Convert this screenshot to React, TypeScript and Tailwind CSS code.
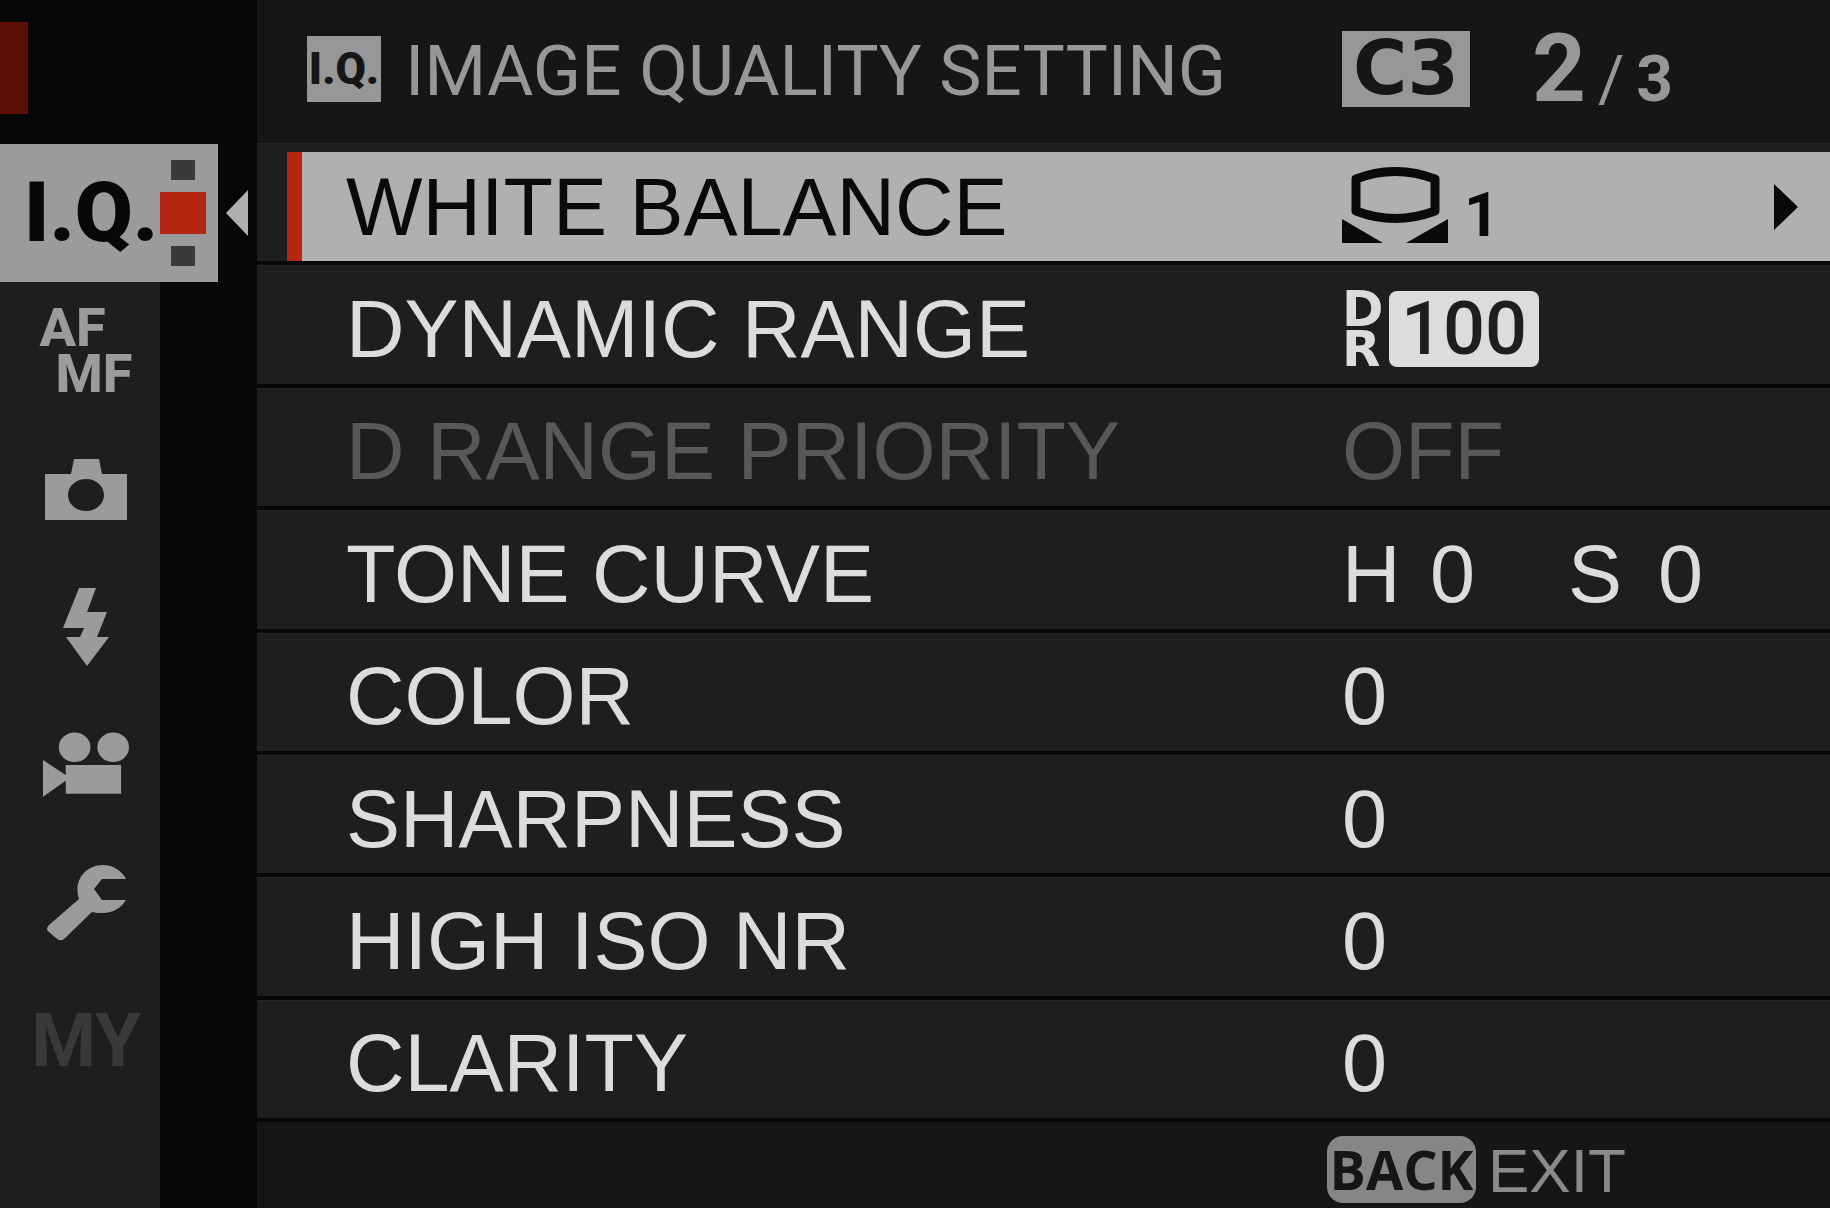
import React from "react";
import clsx from "clsx";

const CameraIcon = () => (
  <svg className="w-[82px] h-[61px]" viewBox="0 0 82 61" fill="currentColor" aria-hidden="true">
    <path
      fillRule="evenodd"
      d="M0 15H26L29 0H54L57 15H82V61H0ZM41 20C31 20 23 27 23 36S31 52 41 52S59 45 59 36S51 20 41 20Z"
    />
  </svg>
);

const FlashIcon = () => (
  <svg className="w-[46px] h-[78px]" viewBox="0 0 46 78" fill="currentColor" aria-hidden="true">
    <path d="M16 0H33L24 24H44L34 49H46L24 78L3 49H17L21 40H0Z" />
  </svg>
);

const MovieIcon = () => (
  <svg className="w-[86px] h-[66px]" viewBox="0 0 87 66" fill="currentColor" aria-hidden="true">
    <ellipse cx="32" cy="15" rx="16" ry="15" />
    <ellipse cx="71" cy="15" rx="16" ry="15" />
    <path d="M0 28L23 43V33H79V62H23V49L0 65Z" />
  </svg>
);

const WrenchIcon = () => (
  <svg className="w-[80px] h-[76px]" viewBox="0 0 80 76" fill="currentColor" aria-hidden="true">
    <path d="M80 14H56L48 24L56 35H80C75 43 67 48 57 48C53 48 50 48 46 47L18 74Q14 77 10 73L3 67Q-1 64 3 60L33 34C27 16 39 0 57 0C67 0 76 6 80 14Z" />
  </svg>
);

const CustomWhiteBalanceIcon = () => (
  <svg className="w-[106px] h-[76px]" viewBox="0 0 106 76" fill="currentColor" aria-hidden="true">
    <path
      d="M14 12Q53 -3 93 12V44Q53 59 14 44Z"
      fill="none"
      stroke="currentColor"
      strokeWidth="9"
      strokeLinejoin="round"
    />
    <path d="M0 52L41 76H0ZM106 52V76H64Z" />
  </svg>
);

interface Tab {
  name: string;
  icon: React.ReactNode;
  disabled?: boolean;
}

const tabs: Tab[] = [
  {
    name: "AF MF setting",
    icon: (
      <span className="flex flex-col text-[54px] leading-[46px] font-extrabold text-left">
        <span>AF</span>
        <span className="pl-4">MF</span>
      </span>
    ),
  },
  { name: "Shooting setting", icon: <CameraIcon /> },
  { name: "Flash setting", icon: <FlashIcon /> },
  { name: "Movie setting", icon: <MovieIcon /> },
  { name: "Set up", icon: <WrenchIcon /> },
  {
    name: "My menu",
    icon: <span className="text-[74px] leading-none font-bold">MY</span>,
    disabled: true,
  },
];

interface Setting {
  label: string;
  value: React.ReactNode;
  disabled?: boolean;
}

const settings: Setting[] = [
  {
    label: "WHITE BALANCE",
    value: (
      <span className="flex items-end pb-1">
        <CustomWhiteBalanceIcon />
        <span className="pl-4 font-['Roboto',sans-serif] text-[62px] leading-[56px] font-bold">1</span>
      </span>
    ),
  },
  {
    label: "DYNAMIC RANGE",
    value: (
      <span className="flex items-center">
        <span className="flex flex-col w-[47px] font-['DejaVu_Sans',sans-serif] text-[50px] leading-[40px] font-bold">
          <span>D</span>
          <span>R</span>
        </span>
        <span className="flex items-center h-[76px] px-3 rounded-lg bg-[#dcdcdc] text-[#1e1e1e] font-['Roboto',sans-serif] text-[74px] font-medium">
          100
        </span>
      </span>
    ),
  },
  { label: "D RANGE PRIORITY", value: "OFF", disabled: true },
  {
    label: "TONE CURVE",
    value: (
      <span className="flex">
        <span className="w-[88px]">H</span>
        <span className="w-[138px]">0</span>
        <span className="w-[90px]">S</span>
        <span>0</span>
      </span>
    ),
  },
  { label: "COLOR", value: "0" },
  { label: "SHARPNESS", value: "0" },
  { label: "HIGH ISO NR", value: "0" },
  { label: "CLARITY", value: "0" },
];

const Sidebar = () => (
  <aside className="flex flex-col w-[257px] shrink-0 font-['Roboto',sans-serif]">
    <div className="h-[144px] pt-[22px]">
      <div className="w-7 h-[92px] bg-[#5c0f07]" />
    </div>

    {/* Active tab with its page marker */}
    <div className="flex items-center gap-2">
      <button
        type="button"
        aria-label="Image quality setting"
        className="flex items-center justify-between w-[218px] h-[138px] pl-6 pr-3 bg-[#9b9b9b] text-[#080808]"
      >
        <span className="text-[84px] leading-none font-black">I.Q.</span>
        <span className="flex flex-col items-center gap-3">
          <span className="w-6 h-5 bg-[#3a3a3a]" />
          <span className="w-[46px] h-[42px] bg-[#b52613]" />
          <span className="w-6 h-5 bg-[#3a3a3a]" />
        </span>
      </button>
      <svg className="w-[22px] h-[46px]" viewBox="0 0 22 46" fill="#b0b0b0" aria-hidden="true">
        <path d="M22 0V46L0 23Z" />
      </svg>
    </div>

    <nav className="flex-1 w-[160px] bg-[#1e1e1e]">
      {tabs.map((tab) => (
        <button
          key={tab.name}
          type="button"
          aria-label={tab.name}
          disabled={tab.disabled}
          className={clsx(
            "flex items-center justify-center w-full h-[138px] pl-3",
            tab.disabled ? "text-[#393939]" : "text-[#9b9b9b]"
          )}
        >
          {tab.icon}
        </button>
      ))}
    </nav>
  </aside>
);

const Header = () => (
  <header className="flex items-center h-[143px] pl-[50px] pb-1.5 font-['Roboto',sans-serif] text-[#979797]">
    <span className="flex items-center justify-center w-[74px] h-[66px] bg-[#979797] text-[#161616] text-[44px] font-black">
      I.Q.
    </span>
    <h1 className="flex-1 pl-6 pt-1 text-[71px] leading-none whitespace-nowrap">IMAGE QUALITY SETTING</h1>
    <div className="flex items-center w-[488px] shrink-0">
      <span className="flex items-center justify-center w-[128px] h-[76px] bg-[#979797] text-[#161616] font-['DejaVu_Sans',sans-serif] text-[74px] font-bold">
        C3
      </span>
      <p className="flex items-baseline gap-3 pl-[62px] leading-none">
        <span className="text-[94px] font-bold">2</span>
        <span className="text-[64px]">/</span>
        <span className="text-[64px] font-bold">3</span>
      </p>
    </div>
  </header>
);

const SettingRow = ({ setting, selected }: { setting: Setting; selected: boolean }) => (
  <li className={clsx("flex border-t border-t-[#262626] border-b-4 border-b-[#080808]", selected && "pt-2 pl-[30px]")}>
    <button
      type="button"
      disabled={setting.disabled}
      className={clsx(
        "flex items-center w-full text-left whitespace-nowrap",
        selected
          ? "border-l-[15px] border-[#b52613] bg-[#b0b0b0] pl-11 text-[#0a0a0a]"
          : "pl-[89px] pt-2",
        !selected && (setting.disabled ? "text-[#585858]" : "text-[#dcdcdc]")
      )}
    >
      <span className="flex-1">{setting.label}</span>
      <span className="flex items-center justify-between w-[488px] shrink-0 pr-8">
        {setting.value}
        {selected && (
          <svg className="w-6 h-[46px]" viewBox="0 0 24 46" fill="currentColor" aria-hidden="true">
            <path d="M0 0L24 23L0 46Z" />
          </svg>
        )}
      </span>
    </button>
  </li>
);

const Footer = () => (
  <footer className="flex justify-end h-[86px] pt-2 bg-[#161616]">
    <button type="button" className="flex items-center gap-3 w-[503px] text-[#8a8a8a]">
      <span className="flex items-center justify-center w-[149px] h-[67px] rounded-2xl bg-[#868686] text-[#161616] font-['Open_Sans',sans-serif] text-[54px] leading-none font-bold">
        BACK
      </span>
      <span className="pt-1 text-[62px] leading-none">EXIT</span>
    </button>
  </footer>
);

const App: React.FC = () => {
  return (
    <div className="flex min-h-screen bg-[#070707]">
      <Sidebar />
      <main className="flex flex-col flex-1 bg-[#161616] font-['Liberation_Sans',sans-serif]">
        <Header />
        <ul className="grid flex-1 auto-rows-fr bg-[#1e1e1e] text-[81px] leading-[94px]">
          {settings.map((setting, index) => (
            <SettingRow key={setting.label} setting={setting} selected={index === 0} />
          ))}
        </ul>
        <Footer />
      </main>
    </div>
  );
};

export default App;
